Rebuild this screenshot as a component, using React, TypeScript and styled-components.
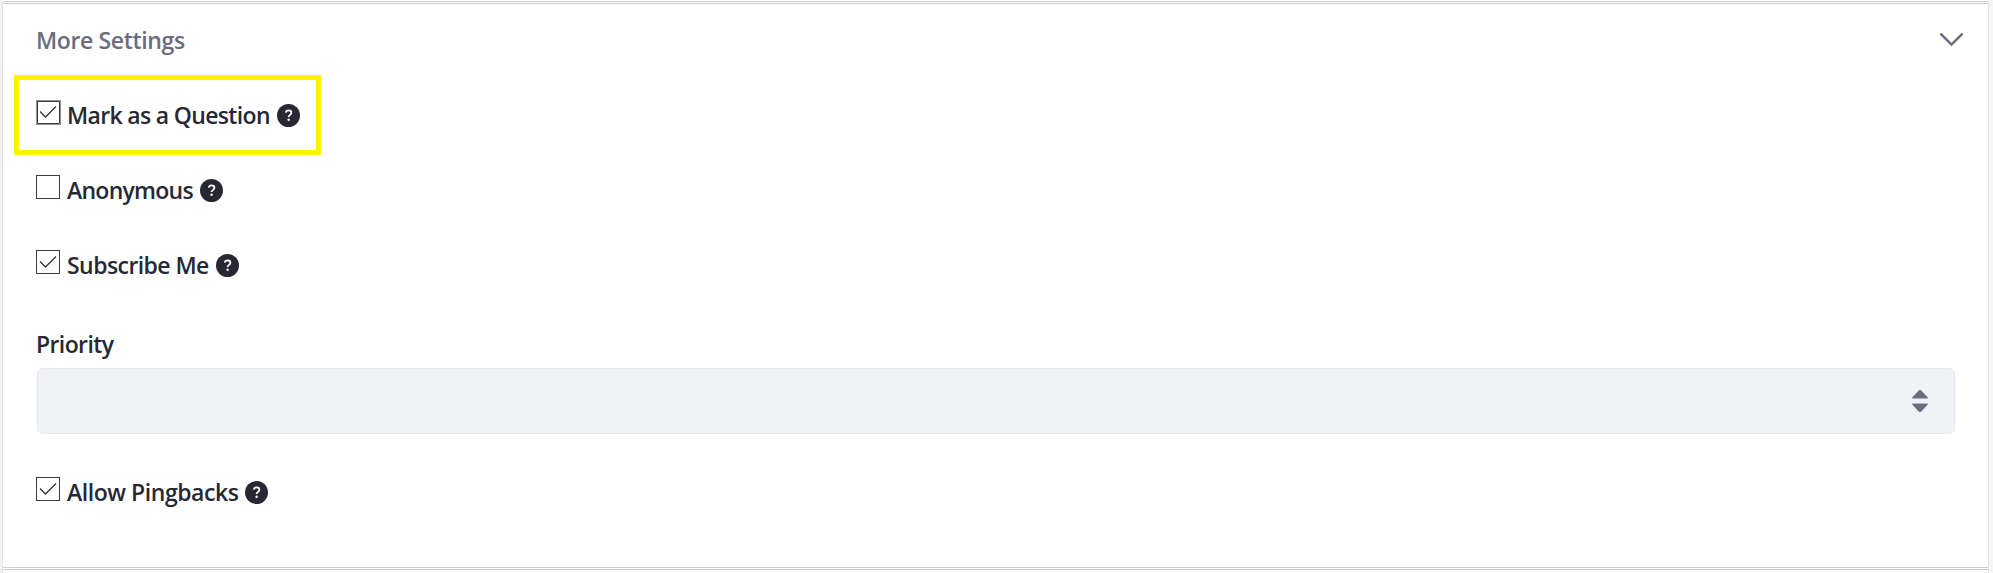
import React from "react";
import styled, { createGlobalStyle } from "styled-components";

const GlobalStyle = createGlobalStyle`
  * { box-sizing: border-box; }
  body { margin: 0; background: #fff; overflow: hidden; font-family: "Open Sans", "Noto Sans", sans-serif; }
`;

const Page = styled.div`
  display: flex;
  flex-direction: column;
  height: 573px;
  padding: 1px 4px 0 2px;
  background: linear-gradient(to right, #f3f3f4 0 2px, #fff 2px 1989px, #f5f5f6 1989px);
`;

const Panel = styled.section`
  display: flex;
  flex-direction: column;
  height: 569px;
  border-left: 1px solid #e3e3e6;
  border-right: 1px solid #e3e3e6;
`;

const Rule = styled.div`
  flex: none;
  height: 3px;
  border: solid #cdced9;
  border-width: 1px 0;
`;

const Tail = styled.div`
  height: 3px;
  border: solid #e3e3e6;
  border-width: 0 1px;
`;

const Body = styled.div`
  flex: 1;
  display: flex;
  flex-direction: column;
  align-items: flex-start;
  padding: 20px 33px 0 33px;
`;

const Header = styled.header`
  align-self: stretch;
  display: flex;
  justify-content: space-between;
  height: 32px;
  margin: 0 -8px 19px 0;
`;

const Text = styled.span<{ $spacing: number; $muted?: boolean }>`
  font-size: 23px;
  line-height: 32px;
  font-weight: 600;
  white-space: nowrap;
  letter-spacing: ${(p) => p.$spacing}px;
  color: ${(p) => (p.$muted ? "#6b6c7e" : "#272833")};
`;

const Highlight = styled.div`
  border: 5px solid #fff200;
  width: 307px;
  height: 80px;
  padding: 19px 17px;
  margin: 0 0 19px -22px;
`;

const Row = styled.label<{ $after?: number }>`
  display: flex;
  height: 32px;
  margin-bottom: ${(p) => p.$after ?? 0}px;
`;

const Box = styled.svg`
  flex: none;
  width: 25px;
  height: 25px;
  margin: 1px 6px 0 0;
`;

const Help = styled.svg`
  flex: none;
  width: 23px;
  height: 23px;
  margin: 5px 0 0 7px;
`;

const Chevron = styled.svg`
  width: 23px;
  height: 14px;
  margin-top: 9px;
`;

const Select = styled.div`
  align-self: stretch;
  display: flex;
  align-items: center;
  justify-content: flex-end;
  height: 66px;
  margin: 8px 0 42px 1px;
  padding-right: 26px;
  border: 1px solid #e7e7ed;
  border-radius: 6px;
  background: #f1f2f5;
`;

const PriorityLabel = styled.div`
  height: 32px;
`;

type CheckProps = { label: string; spacing: number; checked?: boolean; focused?: boolean; after?: number };

function CheckRow({ label, spacing, checked, focused, after }: CheckProps) {
  return (
    <Row $after={after}>
      <Box viewBox="0 0 25 25" fill="none">
        {focused ? (
          <>
            <rect x="0.5" y="0.5" width="24" height="24" stroke="#222" strokeDasharray="1 1" />
            <path d="M1 1.5H23.5V23.5H1.5V1" stroke="#3c3c3c" />
          </>
        ) : (
          <rect x="0.5" y="0.5" width="23" height="23" stroke="#3c3c3c" />
        )}
        {checked && <path d="M4 11.5 9.5 17 20 6.5" stroke="#333" strokeWidth="1.25" />}
      </Box>
      <Text $spacing={spacing}>{label}</Text>
      <Help viewBox="0 0 23 23">
        <circle cx="11.5" cy="11.5" r="11.5" fill="#272833" />
        <path d="M8.8 8.7C9 7 10.1 6.3 11.6 6.3c1.7 0 2.8 1 2.8 2.4 0 2.1-2.8 2.2-2.8 4.3" fill="none" stroke="#fff" strokeWidth="1.8" />
        <circle cx="11.6" cy="15.8" r="1.2" fill="#fff" />
      </Help>
    </Row>
  );
}

export default function App() {
  return (
    <>
      <GlobalStyle />
      <Page>
        <Panel>
          <Rule />
          <Body>
            <Header>
              <Text $muted $spacing={-0.36}>More Settings</Text>
              <Chevron viewBox="0 0 23 14">
                <path d="M1.2 1.3 11.5 11.6 21.8 1.3" fill="none" stroke="#6b6c7e" strokeWidth="2.5" strokeLinecap="round" />
              </Chevron>
            </Header>
            <Highlight>
              <CheckRow label="Mark as a Question" spacing={-0.66} checked focused />
            </Highlight>
            <CheckRow label="Anonymous" spacing={-0.74} after={43} />
            <CheckRow label="Subscribe Me" spacing={-0.56} checked after={47} />
            <PriorityLabel>
              <Text $spacing={-0.6}>Priority</Text>
            </PriorityLabel>
            <Select>
              <svg width="16" height="24" viewBox="0 0 16 24" fill="#6b6c7e">
                <path d="M.8 9.5Q-.4 9.3.6 8L7 1.2Q8 .4 9 1.2L15.4 8Q16.4 9.3 15.2 9.5Z" />
                <path d="M.8 14.5Q-.4 14.7.6 16L7 22.8Q8 23.6 9 22.8L15.4 16Q16.4 14.7 15.2 14.5Z" />
              </svg>
            </Select>
            <CheckRow label="Allow Pingbacks" spacing={-0.45} checked />
          </Body>
          <Rule />
        </Panel>
        <Tail />
      </Page>
    </>
  );
}
